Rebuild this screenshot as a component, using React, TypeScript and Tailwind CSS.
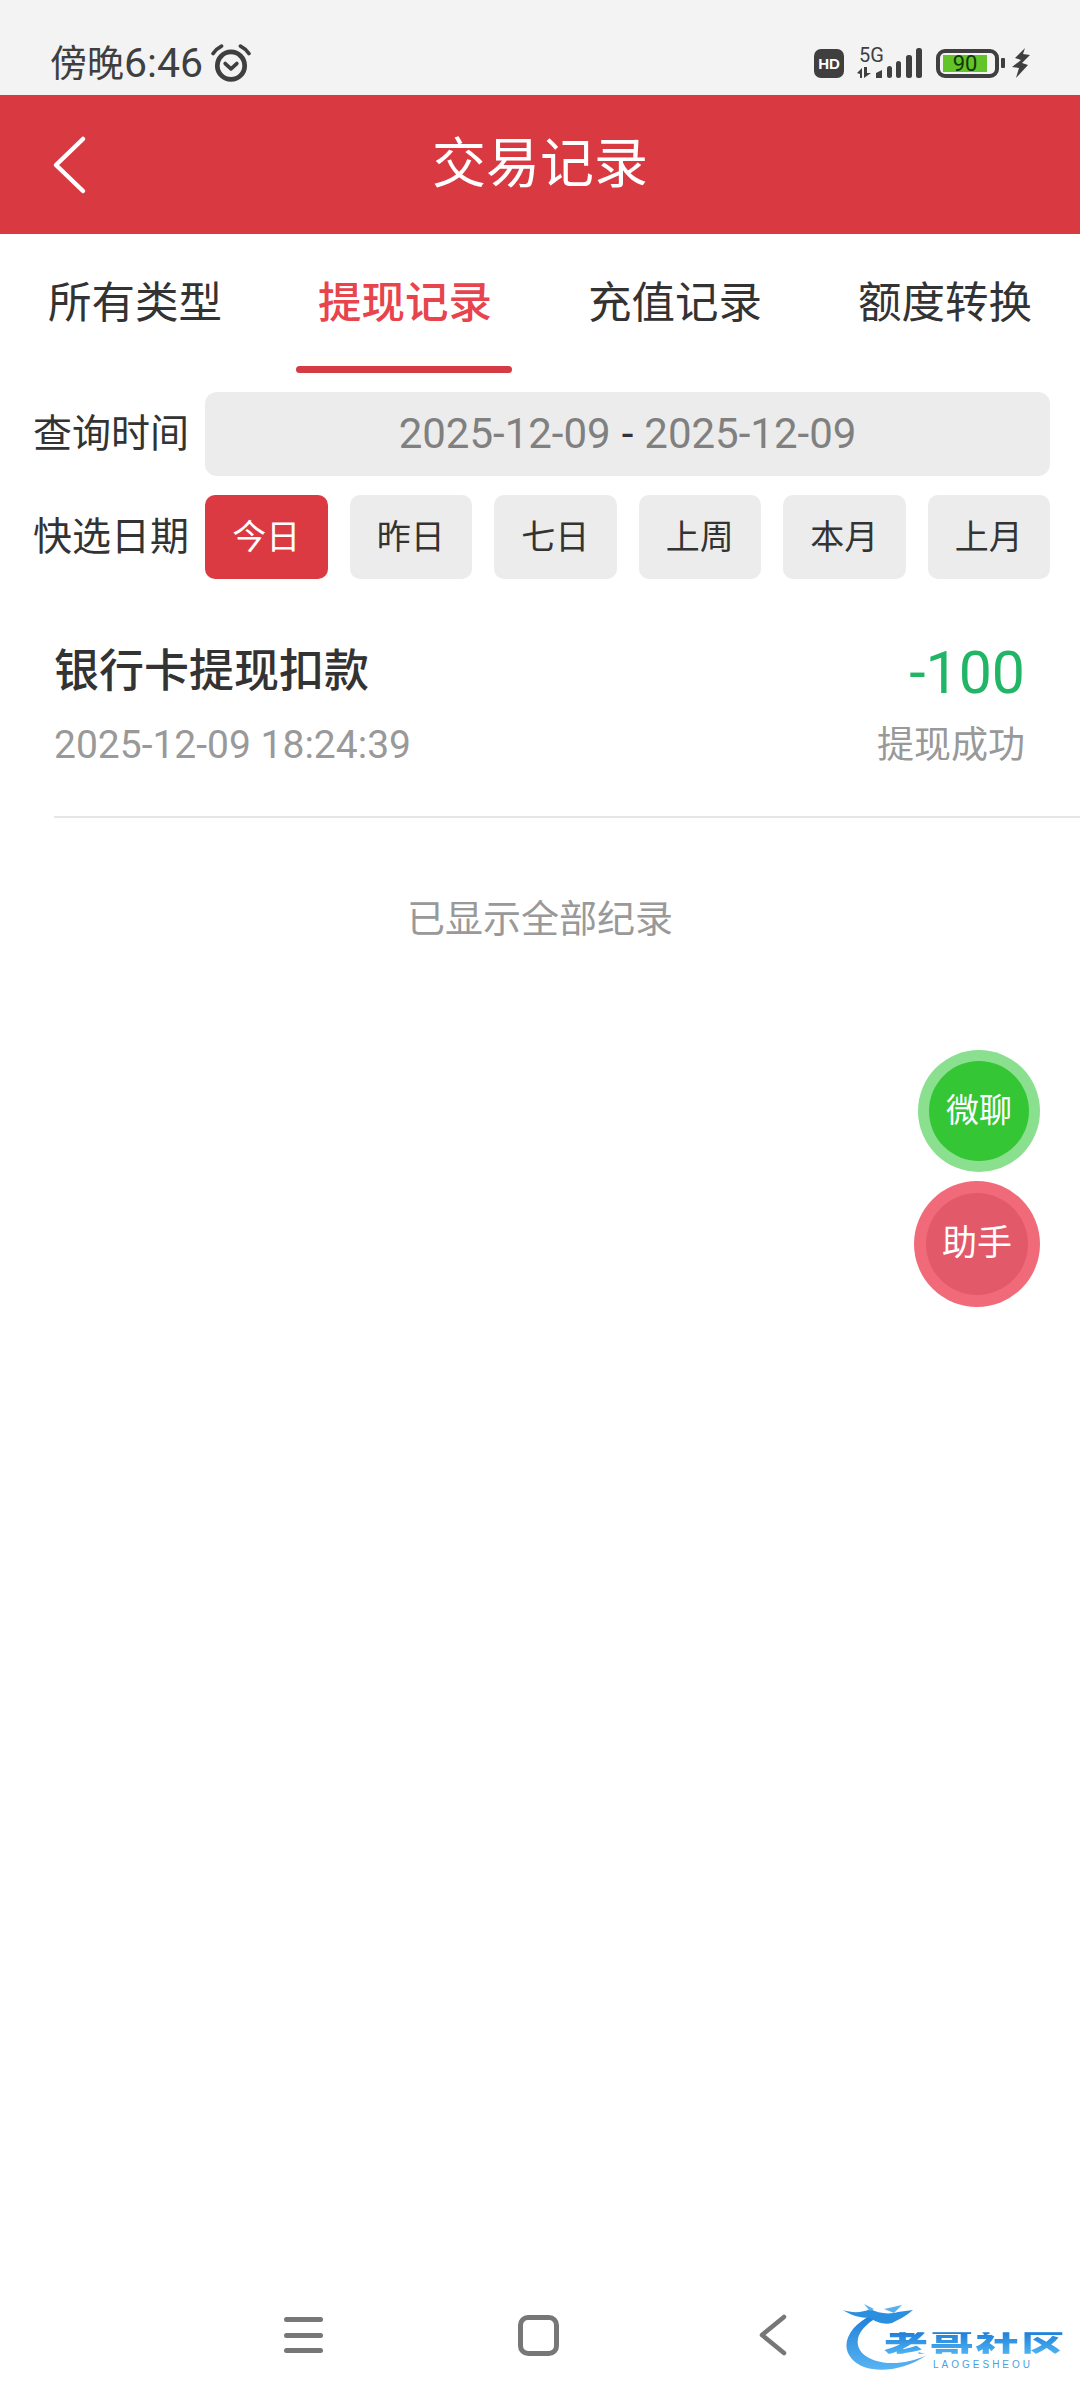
import React from "react";

const Sans = '[font-family:Roboto,"Noto_Sans_CJK_SC",sans-serif]';

function Alarm() {
  return (
    <svg width="40" height="38" viewBox="0 0 38 36" fill="none" stroke="#3f3f3f" className="ml-[8px]">
      <circle cx="19" cy="20.5" r="13" strokeWidth="4.5" />
      <path d="M13.5 18.5 L19 23.5 L24.5 18.5" strokeWidth="3.5" strokeLinecap="round" strokeLinejoin="round" />
      <path d="M2 9 C4 6 7 3.5 10 2" strokeWidth="3.5" strokeLinecap="round" />
      <path d="M36 9 C34 6 31 3.5 28 2" strokeWidth="3.5" strokeLinecap="round" />
    </svg>
  );
}

function StatusIcons() {
  return (
    <div className="flex items-center">
      <div className="w-[30px] h-[29px] rounded-[7px] bg-[#3f3f3f] flex items-center justify-center text-white text-[15px] font-bold leading-none font-['Liberation_Sans',sans-serif]">
        HD
      </div>
      <svg width="68" height="32" viewBox="0 0 68 32" className="ml-[13px] overflow-visible" fill="#3f3f3f">
        <text x="2" y="15" fontSize="20" fontFamily="Roboto, sans-serif">5G</text>
        <path d="M0 26 L5 21 V31 H3 V27 Z M7 20 H10 V26 L14 26 L7 31 Z" />
        <path d="M19 26 L25 23 V31 H19 Z" />
        <rect x="30" y="19" width="5" height="12" rx="2.5" />
        <rect x="39" y="14" width="5" height="17" rx="2.5" />
        <rect x="49" y="8" width="6" height="23" rx="2.5" />
        <rect x="59" y="1" width="6" height="30" rx="2.5" />
      </svg>
      <div className="ml-[11px] w-[63px] h-[29px] rounded-[9px] border-[4px] border-[#3f3f3f] flex items-center justify-start pl-[3px]">
        <div className="w-[44px] h-[17px] bg-[#62c429] flex items-center justify-center text-[#14360a] text-[22px] leading-[17px] font-['Roboto',sans-serif]">
          90
        </div>
      </div>
      <div className="ml-[2px] w-[4px] h-[10px] rounded-[1px] bg-[#3f3f3f]" />
      <svg width="18" height="30" viewBox="0 0 18 30" className="ml-[7px]" fill="#3f3f3f">
        <path d="M13 0 L3 10 L9 12 L0 19 L7 20 L4 30 L16 17 L10 15 L18 7 L11 6 Z" />
      </svg>
    </div>
  );
}

function QuickBtn({ label, active }: { label: string; active?: boolean }) {
  return (
    <div
      className={
        active
          ? "h-[84px] rounded-[10px] bg-[#dc3a42] text-white text-[34px] flex items-center justify-center"
          : "h-[84px] rounded-[10px] bg-[#ececec] text-[#333333] text-[34px] flex items-center justify-center"
      }
    >
      {label}
    </div>
  );
}

function Logo() {
  const glyph =
    "bg-linear-to-b from-[#1f7fd8] to-[#4db2f2] bg-clip-text text-transparent";
  return (
    <div className="absolute left-[842px] top-[2303px] w-[226px] h-[72px]">
      <svg width="226" height="72" viewBox="0 0 226 72" fill="none" className="absolute left-0 top-0">
        <defs>
          <linearGradient id="arc" x1="0" y1="0" x2="0" y2="1">
            <stop offset="0" stopColor="#1f7fd8" />
            <stop offset="1" stopColor="#58b4f2" />
          </linearGradient>
        </defs>
        <path d="M30 12 C8 22 -3 42 10 56 C22 70 55 72 85 52 C60 64 32 62 20 50 C10 38 18 24 36 14 Z" fill="url(#arc)" />
        <path d="M1 7 C10 10 20 10 28 6 C36 10 46 12 56 9 L71 7 C64 13 56 17 50 20 C42 22 34 19 28 15 C18 15 8 12 1 7 Z" fill="#2b8fe0" />
        <path d="M22 1 L32 6 L28 8 Z M42 6 L60 2 L52 10 Z" fill="#5ab0ee" />
      </svg>
      <div className="absolute left-[41px] top-[25px] w-[183px] h-[30px] grid grid-cols-4 text-[44px] leading-[30px] font-black text-center scale-y-[0.72] [font-family:'Noto_Sans_CJK_SC',sans-serif]">
        <span className={glyph}>老</span>
        <span className={glyph}>哥</span>
        <span className={glyph}>社</span>
        <span className={glyph}>区</span>
      </div>
      <div className="absolute left-[91px] top-[56px] text-[10px] leading-[11px] tracking-[3px] text-[#4a9fe0] font-['Liberation_Sans',sans-serif]">
        LAOGESHEOU
      </div>
    </div>
  );
}

export default function App() {
  return (
    <div className={`relative w-[1080px] h-[2400px] bg-white flex flex-col overflow-hidden ${Sans}`}>
      {/* status bar */}
      <div className="h-[95px] bg-[#f3f3f3] flex items-center justify-between pl-[50px] pr-[50px] pt-[31px] shrink-0">
        <div className="flex items-center text-[#3f3f3f]">
          <span className="text-[37px] leading-none">
            傍晚<span className="text-[41px]">6:46</span>
          </span>
          <Alarm />
        </div>
        <StatusIcons />
      </div>

      {/* header */}
      <div className="h-[139px] bg-[#d93a41] grid grid-cols-[1fr_auto_1fr] items-center shrink-0">
        <div className="pl-[50px]">
          <svg width="40" height="60" viewBox="0 0 40 60" fill="none" stroke="white" strokeWidth="4.5" strokeLinecap="round" strokeLinejoin="round">
            <path d="M33 4 L6 30 L33 56" />
          </svg>
        </div>
        <div className="text-white text-[54px] leading-none">交易记录</div>
        <div />
      </div>

      {/* tabs */}
      <div className="h-[139px] grid grid-cols-4 shrink-0">
        {["所有类型", "提现记录", "充值记录", "额度转换"].map((t, i) => (
          <div key={t} className="relative flex items-center justify-center">
            <span className={i === 1 ? "text-[43.5px] leading-none text-[#e8444d] font-medium" : "text-[43.5px] leading-none text-[#333333]"}>{t}</span>
            {i === 1 && <div className="absolute bottom-0 left-[26px] w-[216px] h-[7px] rounded-full bg-[#d43b45]" />}
          </div>
        ))}
      </div>

      {/* date range */}
      <div className="mt-[19px] pl-[33px] pr-[30px] flex items-center shrink-0">
        <div className="w-[172px] shrink-0 text-[39px] leading-none text-[#333333]">查询时间</div>
        <div className="flex-1 h-[84px] rounded-[12px] bg-[#ececec] flex items-center justify-center text-[42px] leading-none text-[#808080]">
          2025-12-09<span className="text-[#333333] mx-[11px]">-</span>2025-12-09
        </div>
      </div>

      {/* quick dates */}
      <div className="mt-[19px] pl-[33px] pr-[30px] flex items-center shrink-0">
        <div className="w-[172px] shrink-0 text-[39px] leading-none text-[#333333]">快选日期</div>
        <div className="flex-1 grid grid-cols-6 gap-[22px]">
          <QuickBtn label="今日" active />
          <QuickBtn label="昨日" />
          <QuickBtn label="七日" />
          <QuickBtn label="上周" />
          <QuickBtn label="本月" />
          <QuickBtn label="上月" />
        </div>
      </div>

      {/* record */}
      <div className="ml-[54px] h-[239px] border-b-2 border-[#e6e6e6] pr-[55px] pt-[61px] shrink-0">
        <div className="flex items-center justify-between h-[62px]">
          <div className="text-[45px] leading-none font-medium text-[#333333]">银行卡提现扣款</div>
          <div className="text-[59px] leading-none text-[#21b566] pt-[2px]">-100</div>
        </div>
        <div className="flex items-center justify-between mt-[18px] h-[50px]">
          <div className="text-[39px] leading-none text-[#999999]">2025-12-09 18:24:39</div>
          <div className="text-[37px] leading-none text-[#999999]">提现成功</div>
        </div>
      </div>

      <div className="mt-[81px] text-center text-[38px] leading-[40px] text-[#999999] shrink-0">已显示全部纪录</div>

      {/* nav bar */}
      <div className="mt-auto h-[130px] flex items-center pl-[284px] shrink-0">
        <div className="w-[39px] h-[36px] flex flex-col justify-between">
          <div className="h-[5px] rounded-full bg-[#777777]" />
          <div className="h-[5px] rounded-full bg-[#777777]" />
          <div className="h-[5px] rounded-full bg-[#777777]" />
        </div>
        <div className="ml-[195px] w-[41px] h-[41px] rounded-[10px] border-[5px] border-[#777777]" />
        <svg width="28" height="42" viewBox="0 0 28 42" fill="none" stroke="#777777" strokeWidth="4.5" strokeLinecap="round" strokeLinejoin="round" className="ml-[200px]">
          <path d="M25 3 L3 21 L25 39" />
        </svg>
      </div>

      {/* floating buttons */}
      <div className="absolute left-[918px] top-[1050px] w-[122px] h-[122px] rounded-full bg-[#8ae08f] flex items-center justify-center">
        <div className="w-[100px] h-[100px] rounded-full bg-[#35c635] text-white text-[33px] flex items-center justify-center">微聊</div>
      </div>
      <div className="absolute left-[914px] top-[1181px] w-[126px] h-[126px] rounded-full bg-[#f06a7a] flex items-center justify-center">
        <div className="w-[102px] h-[102px] rounded-full bg-[#e25a69] text-white text-[35px] flex items-center justify-center">助手</div>
      </div>

      <Logo />
    </div>
  );
}
